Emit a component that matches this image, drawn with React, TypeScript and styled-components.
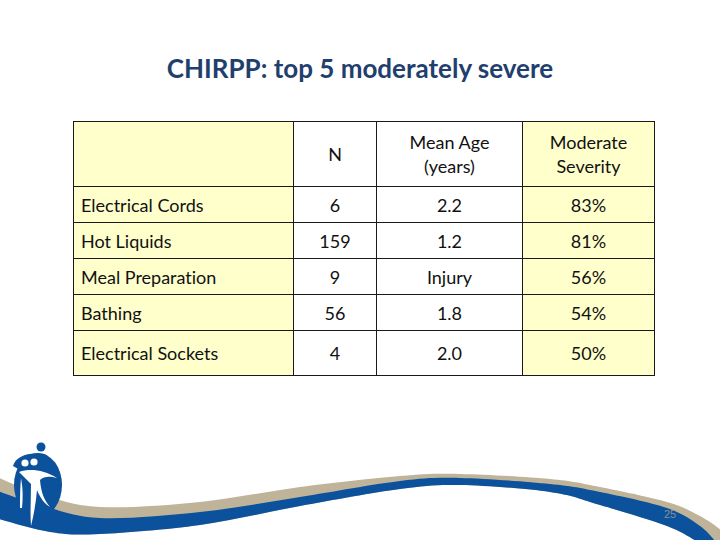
import React from 'react';
import styled, { createGlobalStyle } from 'styled-components';

const GlobalStyle = createGlobalStyle`
	html, body {
		margin: 0;
		padding: 0;
		background: #ffffff;
	}
`;

type Row = {
	label: string;
	n: string;
	age: string;
	severity: string;
};

const rows: Row[] = [
	{ label: 'Electrical Cords', n: '6', age: '2.2', severity: '83%' },
	{ label: 'Hot Liquids', n: '159', age: '1.2', severity: '81%' },
	{ label: 'Meal Preparation', n: '9', age: 'Injury', severity: '56%' },
	{ label: 'Bathing', n: '56', age: '1.8', severity: '54%' },
	{ label: 'Electrical Sockets', n: '4', age: '2.0', severity: '50%' },
];

// catmull-rom -> cubic bezier, for the swoosh bands
const smooth = (pts: number[][]) => {
	let d = `M${pts[0][0]},${pts[0][1]}`;
	for (let i = 0; i < pts.length - 1; i++) {
		const p0 = pts[i - 1] || pts[i];
		const p1 = pts[i];
		const p2 = pts[i + 1];
		const p3 = pts[i + 2] || p2;
		const c1 = [p1[0] + (p2[0] - p0[0]) / 6, p1[1] + (p2[1] - p0[1]) / 6];
		const c2 = [p2[0] - (p3[0] - p1[0]) / 6, p2[1] - (p3[1] - p1[1]) / 6];
		d += ` C${c1[0]},${c1[1]} ${c2[0]},${c2[1]} ${p2[0]},${p2[1]}`;
	}
	return d;
};

const blueTop = [[-5, 490], [40, 505], [100, 518], [200, 512], [300, 497], [400, 481], [460, 478], [550, 484], [600, 492], [667, 508], [700, 526], [716, 542]];
const blueBottom = [[698, 542], [667, 526], [600, 505], [550, 492], [460, 485], [400, 489], [300, 506], [200, 525], [100, 534], [50, 532], [-5, 518]];
const beigeTop = [[-5, 476], [40, 494], [100, 507], [200, 502], [300, 487], [400, 476], [460, 474], [550, 479], [600, 487], [667, 502], [700, 516], [724, 532]];

const bluePath = `${smooth(blueTop)} L${blueBottom[0][0]},${blueBottom[0][1]} ${smooth(blueBottom).replace(/^M[^C]*/, '')} Z`;
const beigePath = `${smooth(beigeTop)} L724,542 L698,542 ${smooth(blueBottom).replace(/^M[^C]*/, '')} Z`;

const Swoosh = () => (
	<SwooshSvg width={720} height={100} viewBox='0 440 720 100'>
		<path d={beigePath} fill='#bfb49a' />
		<path d={bluePath} fill='#0b519c' />
		{/* logo figure */}
		<ellipse cx={38} cy={485} rx={24} ry={32} fill='#0b519c' />
		<circle cx={41} cy={447} r={4.5} fill='#0b519c' />
		<path d='M13,466 C16,455 32,451 47,455 C40,460 28,462 20,470 Z' fill='#0b519c' />
		<circle cx={25} cy={463} r={3.6} fill='#ffffff' />
		<circle cx={34} cy={462} r={3.6} fill='#ffffff' />
		<path d='M19,472 C30,468 44,470 57,478 C50,476 44,476 40,480 C41,492 44,500 50,507 C45,504 40,498 37,490 C36,502 34,514 31,526 C30,512 31,498 31,484 C27,480 23,476 19,472 Z' fill='#ffffff' />
		<path d='M21,478 C23,488 23,498 22,508 L20,508 C20,498 20,488 21,478 Z' fill='#ffffff' />
	</SwooshSvg>
);

const App = () => {
	return (
		<>
			<GlobalStyle />
			<Slide>
				<Title>CHIRPP: top 5 moderately severe</Title>
				<TableWrap>
					<DataTable>
						<colgroup>
							<col style={{ width: 220 }} />
							<col style={{ width: 83 }} />
							<col style={{ width: 146 }} />
							<col style={{ width: 132 }} />
						</colgroup>
						<thead>
							<HeadRow>
								<Cell $shade />
								<Cell>N</Cell>
								<Cell>
									Mean Age
									<br />
									(years)
								</Cell>
								<Cell $shade>
									Moderate
									<br />
									Severity
								</Cell>
							</HeadRow>
						</thead>
						<tbody>
							{rows.map((r, i) => (
								<BodyRow key={r.label} $last={i === rows.length - 1}>
									<LabelCell $shade>{r.label}</LabelCell>
									<Cell>{r.n}</Cell>
									<Cell>{r.age}</Cell>
									<Cell $shade>{r.severity}</Cell>
								</BodyRow>
							))}
						</tbody>
					</DataTable>
				</TableWrap>
				<Swoosh />
				<PageNumber>25</PageNumber>
			</Slide>
		</>
	);
};

const Slide = styled.div`
	position: relative;
	width: 720px;
	height: 540px;
	overflow: hidden;
	background: #ffffff;
	font-family: Lato, 'Liberation Sans', sans-serif;
	font-variant-ligatures: none;
`;

const Title = styled.h1`
	margin: 0;
	padding-top: 51px;
	text-align: center;
	font-size: 26px;
	line-height: 34px;
	font-weight: 700;
	color: #1f3f6e;
`;

const TableWrap = styled.div`
	padding: 36px 0 0 73px;
`;

const DataTable = styled.table`
	border-collapse: collapse;
	table-layout: fixed;
	width: 581px;
	color: #111111;
	font-size: 18px;
`;

const HeadRow = styled.tr`
	height: 65px;
	line-height: 24px;
`;

const BodyRow = styled.tr<{ $last?: boolean }>`
	height: ${(p) => (p.$last ? 45 : 36)}px;
`;

const Cell = styled.td<{ $shade?: boolean }>`
	border: 1px solid #1a1a1a;
	padding: 0;
	text-align: center;
	vertical-align: middle;
	background: ${(p) => (p.$shade ? '#ffffcc' : '#ffffff')};
`;

const LabelCell = styled(Cell)`
	text-align: left;
	padding-left: 7px;
`;

const SwooshSvg = styled.svg`
	position: absolute;
	left: 0;
	bottom: 0;
	display: block;
`;

const PageNumber = styled.div`
	position: absolute;
	left: 664px;
	top: 508px;
	font-family: 'Liberation Sans', Arial, sans-serif;
	font-size: 11px;
	color: #8a8f99;
`;

export default App;
